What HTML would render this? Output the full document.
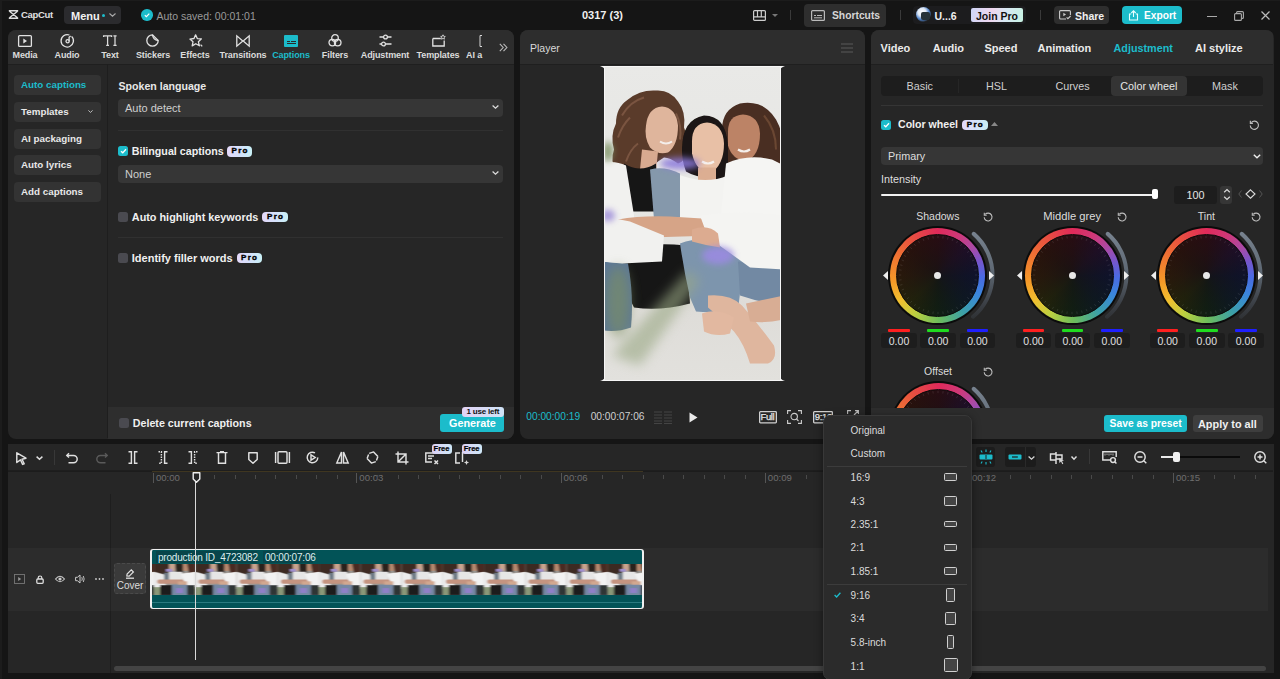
<!DOCTYPE html>
<html><head><meta charset="utf-8">
<style>
*{box-sizing:border-box;margin:0;padding:0}
html,body{width:1280px;height:679px;overflow:hidden;background:#151515;font-family:"Liberation Sans",sans-serif;color:#e6e6e6;position:relative}
div,svg,span{position:absolute}
.b{font-weight:bold}
.t{white-space:nowrap;line-height:1}
.pro{height:10.5px;border-radius:4px;background:linear-gradient(90deg,#e4d8fa,#d4e2fb 55%,#c9f1f6);color:#000;font-size:8px;font-weight:bold;line-height:10.5px;text-align:center;letter-spacing:1.3px;text-indent:1.3px;-webkit-text-stroke:0.4px #000}
.sb{left:14px;width:87px;height:19.5px;background:#333;border-radius:4px}
.sbt{left:21px;font-size:9.8px;font-weight:bold;color:#e8e8e8}
.dd{background:#363636;border-radius:4px}
.cb{width:10px;height:10px;border-radius:2.5px;background:#4a4a50}
.cbon{background:#1cbccb}
.tab{top:51px;font-size:9px;font-weight:bold;color:#dcdcdc;transform:translateX(-50%);letter-spacing:-0.1px}
svg{overflow:visible}
.wo{width:99px;height:99px;border-radius:50%;background:#0b0b0b}
.wr{width:95px;height:95px;border-radius:50%;background:conic-gradient(#e02a5a 0deg,#cf3878 28deg,#aa4aa6 52deg,#7656cc 72deg,#4a6ae2 92deg,#3a86dc 115deg,#3ca0a8 145deg,#6cbc5c 178deg,#bcd040 210deg,#f0c030 236deg,#f59a28 262deg,#f07a30 290deg,#e85040 325deg,#e02a5a 360deg)}
.wi{width:83px;height:83px;border-radius:50%;background:radial-gradient(circle,rgba(22,20,20,0.85) 0%,rgba(22,20,20,0.45) 45%,rgba(22,20,20,0.05) 100%),conic-gradient(#2e0a12 0deg,#220c2c 45deg,#0c1234 90deg,#0a1a28 135deg,#0e2212 180deg,#262808 225deg,#301a08 270deg,#2e100a 315deg,#2e0a12 360deg);border:1.5px solid #0b0b0b}
.wd{width:7px;height:7px;border-radius:50%;background:#e8e8e8}

</style></head><body>

<div style="left:0;top:0;width:1.5px;height:679px;background:#1c1c1c"></div>
<div style="left:0;top:0;width:1280px;height:1px;background:#1c1c1c"></div>
<!-- ============ TOP BAR ============ -->
<svg style="left:7.5px;top:10px" width="11" height="9" viewBox="0 0 11 9"><path d="M0.8 0.8h9.4M0.8 8.2h9.4M1.5 1.2L9.5 7.8M9.5 1.2L1.5 7.8" fill="none" stroke="#ddd" stroke-width="1.4"/></svg>
<div class="t b" style="left:21px;top:10.3px;font-size:9.5px;color:#e0e0e0;letter-spacing:-0.3px">CapCut</div>
<div style="left:64px;top:6px;width:57px;height:18px;background:#2b2b2e;border-radius:4px"></div>
<div class="t b" style="left:71px;top:10.6px;font-size:11px;color:#f2f2f2">Menu</div>
<div style="left:102px;top:13.5px;width:3px;height:3px;border-radius:50%;background:#1cbccb"></div>
<svg style="left:109px;top:13px" width="7" height="4" viewBox="0 0 7 4"><path d="M0.5 0.5L3.5 3.2L6.5 0.5" fill="none" stroke="#aaa" stroke-width="1.1"/></svg>
<div style="left:141px;top:9px;width:11.5px;height:11.5px;border-radius:50%;background:#1cbccb"></div>
<svg style="left:143px;top:11px" width="8" height="8" viewBox="0 0 8 8"><path d="M1.8 4.2L3.4 5.6L6.3 2.6" fill="none" stroke="#fff" stroke-width="1.2"/></svg>
<div class="t" style="left:156.5px;top:10.5px;font-size:10.5px;color:#9a9a9a">Auto saved: 00:01:01</div>
<div class="t b" style="left:582px;top:10.3px;font-size:11px;color:#f0f0f0">0317 (3)</div>

<svg style="left:753px;top:9.5px" width="13" height="11" viewBox="0 0 13 11"><rect x="0.6" y="0.6" width="11.8" height="9.8" rx="1" fill="none" stroke="#ccc" stroke-width="1.2"/><path d="M0.6 6.8h11.8M4.5 0.6v6.2M8.3 0.6v6.2" stroke="#ccc" stroke-width="1.2"/></svg>
<svg style="left:772px;top:13.5px" width="6" height="3" viewBox="0 0 6 3"><path d="M0 0h6L3 3z" fill="#777"/></svg>
<div style="left:790px;top:10px;width:1px;height:10px;background:#3a3a3a"></div>
<div style="left:803.5px;top:3.5px;width:82.5px;height:23.5px;background:#2e2e2e;border-radius:4px"></div>
<svg style="left:811px;top:10px" width="14" height="11" viewBox="0 0 14 11"><rect x="0.6" y="0.6" width="12.8" height="9.8" rx="1" fill="none" stroke="#bbb" stroke-width="1.2"/><path d="M3 5.5h2M6 5.5h5M3 7.8h8" stroke="#bbb" stroke-width="1"/></svg>
<div class="t b" style="left:832px;top:11.3px;font-size:10.3px;color:#d6d6d6">Shortcuts</div>

<div style="left:912.5px;top:6px;width:113.5px;height:18px;background:#1c1c1e;border-radius:4px"></div>
<div style="left:915.5px;top:7px;width:15px;height:15px;border-radius:50%;background:radial-gradient(circle at 40% 35%,#fff 0,#dfe8f5 30%,#4a7fc8 55%,#222 75%)"></div>
<div style="left:921px;top:12px;width:9px;height:8px;border-radius:2px;background:#263238"></div>
<div class="t b" style="left:934.5px;top:10.5px;font-size:10.5px;color:#f0f0f0">U...6</div>
<div style="left:971px;top:8px;width:52px;height:14px;border-radius:2px;background:linear-gradient(100deg,#cfd6f7 0%,#eed6ee 40%,#d9e8f3 65%,#c6f2e2 100%)"></div>
<div class="t b" style="left:976px;top:10.5px;font-size:10.5px;color:#111">Join Pro</div>
<div style="left:1040px;top:10px;width:1px;height:10px;background:#3a3a3a"></div>
<div style="left:899.5px;top:10px;width:1px;height:10px;background:#3a3a3a"></div>

<div style="left:1053.5px;top:6px;width:55px;height:18px;background:#2e2e2e;border-radius:4px"></div>
<svg style="left:1059px;top:10px" width="12" height="10" viewBox="0 0 12 10"><path d="M7 9H1.6A1 1 0 0 1 0.6 8V1.6A1 1 0 0 1 1.6 0.6h8.8a1 1 0 0 1 1 1V5" fill="none" stroke="#ccc" stroke-width="1.1"/><path d="M4.3 2.8v3.4L7 4.5z" fill="#ccc"/><path d="M7.6 7.4l1.3 1.3L11.6 6" fill="none" stroke="#ccc" stroke-width="1.1"/></svg>
<div class="t b" style="left:1075px;top:10.6px;font-size:10.5px;color:#f0f0f0">Share</div>
<div style="left:1122px;top:6px;width:60px;height:18px;background:#1cbccb;border-radius:4px"></div>
<svg style="left:1128px;top:9.5px" width="11" height="11" viewBox="0 0 11 11"><path d="M3.2 4H1.5v6h8V4H7.8" fill="none" stroke="#e8ffff" stroke-width="1.1"/><path d="M5.5 7V0.8M3.3 3L5.5 0.8L7.7 3" fill="none" stroke="#e8ffff" stroke-width="1.1"/></svg>
<div class="t b" style="left:1144px;top:10.6px;font-size:10.2px;color:#fff">Export</div>

<div style="left:1207px;top:15.5px;width:10px;height:1.2px;background:#aaa"></div>
<svg style="left:1234px;top:11px" width="10" height="10" viewBox="0 0 10 10"><rect x="0.6" y="2.6" width="6.8" height="6.8" rx="1" fill="none" stroke="#aaa" stroke-width="1.1"/><path d="M2.6 2.6V1.6a1 1 0 0 1 1-1h4.8a1 1 0 0 1 1 1v4.8a1 1 0 0 1-1 1H7.4" fill="none" stroke="#aaa" stroke-width="1.1"/></svg>
<svg style="left:1261px;top:11px" width="9" height="9" viewBox="0 0 9 9"><path d="M0.5 0.5l8 8M8.5 0.5l-8 8" stroke="#bbb" stroke-width="1.2"/></svg>

<!-- ============ PANEL BACKGROUNDS ============ -->
<div style="left:7.5px;top:30px;width:506.5px;height:408.8px;background:#262626;border-radius:8px;overflow:hidden">
  <div style="left:0;top:0;width:506px;height:34.8px;background:#2d2d2d;border-bottom:1.2px solid #1f1f1f"></div>
  <div style="left:99.5px;top:34px;width:1px;height:374px;background:#1e1e1e"></div>
  <div style="left:100.5px;top:377.2px;width:406px;height:32px;background:#2e2e2e"></div>
</div>
<div style="left:519.5px;top:30px;width:345.5px;height:408.8px;background:#262626;border-radius:8px;overflow:hidden">
  <div style="left:0;top:0;width:345px;height:34.8px;background:#2d2d2d;border-bottom:1.2px solid #1f1f1f"></div>
</div>
<div style="left:871px;top:30px;width:402.5px;height:408.8px;background:#262626;border-radius:8px;overflow:hidden" id="rp">
  <div style="left:0;top:0;width:402px;height:34.8px;background:#2d2d2d;border-bottom:1.2px solid #1f1f1f"></div>
</div>
<div style="left:7.5px;top:443.5px;width:1266px;height:229.5px;background:#262626" id="tl">
  <div style="left:0;top:0;width:1265px;height:27px;border-bottom:1px solid #1e1e1e"></div>
</div>

<!-- ============ LEFT PANEL CONTENT ============ -->
<!-- tabs -->
<svg style="left:18px;top:35px" width="14" height="12" viewBox="0 0 14 12"><rect x="0.6" y="0.6" width="12.8" height="10.8" rx="1" fill="none" stroke="#e2e2e2" stroke-width="1.3"/><path d="M5.3 3.6v4.8L9 6z" fill="#e2e2e2"/></svg>
<div class="t tab" style="left:25px">Media</div>
<svg style="left:60.5px;top:34px" width="14" height="14" viewBox="0 0 14 14"><path d="M10.6 2.4A6.2 6.2 0 1 1 8.4 1" fill="none" stroke="#e2e2e2" stroke-width="1.3"/><circle cx="6.6" cy="7.2" r="1.6" fill="none" stroke="#e2e2e2" stroke-width="1.3"/><path d="M8.1 7.2V3.2L9.6 1.9" fill="none" stroke="#e2e2e2" stroke-width="1.3"/></svg>
<div class="t tab" style="left:67px">Audio</div>
<svg style="left:103px;top:35px" width="15" height="11" viewBox="0 0 15 11"><path d="M0.6 2V0.9H8.6V2M4.6 0.9V10.3M3.2 10.3H6M10.4 0.9H13.6M12 0.9V10.3M10.4 10.3H13.6" fill="none" stroke="#dcdcdc" stroke-width="1.25"/></svg>
<div class="t tab" style="left:110px">Text</div>
<svg style="left:146px;top:34px" width="13" height="13" viewBox="0 0 13 13"><path d="M6.5 0.8A5.7 5.7 0 1 0 12.2 6.5L6.5 0.8z" fill="none" stroke="#e2e2e2" stroke-width="1.3"/><path d="M6.5 0.8Q7 6 12.2 6.5" fill="none" stroke="#e2e2e2" stroke-width="1.3"/></svg>
<div class="t tab" style="left:153px">Stickers</div>
<svg style="left:188.5px;top:33.5px" width="15" height="14" viewBox="0 0 15 14"><path d="M6.6 0.8L8.3 4.6L12.4 4.9L9.4 7.8L10.4 11.8L6.8 9.7L3.2 11.9L4 7.8L0.9 5.1L5 4.5z" fill="none" stroke="#e2e2e2" stroke-width="1.3" stroke-linejoin="round"/><path d="M11.6 10.6l1.6 1.8" stroke="#e2e2e2" stroke-width="1.3"/></svg>
<div class="t tab" style="left:195px">Effects</div>
<svg style="left:236px;top:35px" width="14" height="12" viewBox="0 0 14 12"><path d="M0.8 0.8v10.4L6.8 6zM13.2 0.8v10.4L7.2 6z" fill="none" stroke="#e2e2e2" stroke-width="1.3"/></svg>
<div class="t tab" style="left:243px">Transitions</div>
<div style="left:284px;top:35px;width:14px;height:12px;background:#1cbccb;border-radius:1px"></div>
<div style="left:286.5px;top:41.2px;width:3px;height:1.1px;background:#2a2a2a"></div><div style="left:290.5px;top:41.2px;width:5px;height:1.1px;background:#2a2a2a"></div>
<div style="left:286.5px;top:43.4px;width:9px;height:1.1px;background:#2a2a2a"></div>
<div class="t tab" style="left:291px;color:#1cbccb">Captions</div>
<svg style="left:328px;top:34px" width="14" height="13" viewBox="0 0 14 13"><circle cx="7" cy="4" r="3.3" fill="none" stroke="#e2e2e2" stroke-width="1.3"/><circle cx="4.3" cy="8.6" r="3.3" fill="none" stroke="#e2e2e2" stroke-width="1.3"/><circle cx="9.7" cy="8.6" r="3.3" fill="none" stroke="#e2e2e2" stroke-width="1.3"/></svg>
<div class="t tab" style="left:335px">Filters</div>
<svg style="left:379px;top:34px" width="13" height="13" viewBox="0 0 13 13"><path d="M0.5 3h4M8.5 3h4M0.5 10h2M6.5 10h6" stroke="#e2e2e2" stroke-width="1.3"/><circle cx="6.5" cy="3" r="1.9" fill="none" stroke="#e2e2e2" stroke-width="1.3"/><circle cx="4.5" cy="10" r="1.9" fill="none" stroke="#e2e2e2" stroke-width="1.3"/></svg>
<div class="t tab" style="left:385px">Adjustment</div>
<svg style="left:432px;top:34px" width="14" height="13" viewBox="0 0 14 13"><path d="M0.8 4.5h8M0.8 4.5V12h11.4V6.5" fill="none" stroke="#e2e2e2" stroke-width="1.3"/><path d="M11 0.8l0.7 1.5 1.6 0.2-1.2 1.1 0.3 1.6-1.4-0.8-1.4 0.8 0.3-1.6-1.2-1.1 1.6-0.2z" fill="none" stroke="#d6d6d6" stroke-width="0.9"/></svg>
<div class="t tab" style="left:438px">Templates</div>
<svg style="left:479px;top:35px" width="4" height="12" viewBox="0 0 4 12"><path d="M3 0.5H1v11h2" fill="none" stroke="#d6d6d6" stroke-width="1"/></svg>
<div class="t tab" style="left:466px;transform:none">AI a</div>
<svg style="left:499px;top:43px" width="9" height="9" viewBox="0 0 9 9"><path d="M0.8 0.8L4.2 4.5L0.8 8.2M4.5 0.8L7.9 4.5L4.5 8.2" fill="none" stroke="#bbb" stroke-width="1.1"/></svg>

<!-- sidebar -->
<div class="sb" style="top:75px"></div><div class="t sbt" style="top:80px;color:#1cbccb">Auto captions</div>
<div class="sb" style="top:102px"></div><div class="t sbt" style="top:107px">Templates</div>
<svg style="left:88px;top:110px" width="5" height="3" viewBox="0 0 5 3"><path d="M0.4 0.4L2.5 2.4L4.6 0.4" fill="none" stroke="#ccc" stroke-width="0.9"/></svg>
<div class="sb" style="top:129px"></div><div class="t sbt" style="top:134px">AI packaging</div>
<div class="sb" style="top:155px"></div><div class="t sbt" style="top:160px">Auto lyrics</div>
<div class="sb" style="top:182px"></div><div class="t sbt" style="top:187px">Add captions</div>

<!-- content -->
<div class="t b" style="left:118.5px;top:80.5px;font-size:10.6px;color:#e8e8e8">Spoken language</div>
<div class="dd" style="left:118px;top:98.5px;width:385px;height:18px"></div>
<div class="t" style="left:125px;top:102.5px;font-size:11px;color:#cfcfcf">Auto detect</div>
<svg style="left:492px;top:105px" width="7" height="4" viewBox="0 0 7 4"><path d="M0.6 0.6L3.5 3.2L6.4 0.6" fill="none" stroke="#ddd" stroke-width="1.3"/></svg>
<div style="left:118px;top:130px;width:385px;height:1px;background:#303030"></div>

<div class="cb cbon" style="left:118.3px;top:146px"></div>
<svg style="left:119px;top:147px" width="9" height="8" viewBox="0 0 9 8"><path d="M2 4.2L3.8 5.8L7 2.3" fill="none" stroke="#fff" stroke-width="1.3"/></svg>
<div class="t b" style="left:131.7px;top:146px;font-size:10.7px;color:#f0f0f0">Bilingual captions</div>
<div class="t pro" style="left:227px;top:146.3px;width:25px">Pro</div>
<div class="dd" style="left:118px;top:164.5px;width:385px;height:18px"></div>
<div class="t" style="left:125px;top:168.5px;font-size:11px;color:#cfcfcf">None</div>
<svg style="left:492px;top:171px" width="7" height="4" viewBox="0 0 7 4"><path d="M0.6 0.6L3.5 3.2L6.4 0.6" fill="none" stroke="#ddd" stroke-width="1.3"/></svg>

<div class="cb" style="left:118.2px;top:212px"></div>
<div class="t b" style="left:131.8px;top:211.5px;font-size:10.85px;color:#f0f0f0">Auto highlight keywords</div>
<div class="t pro" style="left:262px;top:211.5px;width:26px">Pro</div>
<div style="left:118px;top:237px;width:385px;height:1px;background:#303030"></div>
<div class="cb" style="left:118.2px;top:253px"></div>
<div class="t b" style="left:131.8px;top:252.5px;font-size:11px;color:#f0f0f0">Identify filler words</div>
<div class="t pro" style="left:236.5px;top:252.5px;width:25px">Pro</div>

<div class="cb" style="left:118.8px;top:417.7px"></div>
<div class="t b" style="left:132.8px;top:417.5px;font-size:10.7px;color:#f0f0f0">Delete current captions</div>
<div style="left:440.3px;top:413.5px;width:63.4px;height:18.5px;background:#1cbccb;border-radius:3px"></div>
<div class="t b" style="left:449px;top:417.5px;font-size:10.8px;color:#fff">Generate</div>
<div class="t" style="left:462px;top:407px;width:41.7px;height:9.5px;border-radius:3px;background:linear-gradient(90deg,#e2d3f5,#cfe3f7);color:#111;font-size:8px;font-weight:bold;line-height:9.5px;text-align:center;letter-spacing:-0.2px">1 use left</div>

<svg style="left:0;top:0;width:0;height:0" width="0" height="0"><defs>
<linearGradient id="arcG" x1="0" y1="-50" x2="0" y2="50" gradientUnits="userSpaceOnUse"><stop offset="0" stop-color="#7c8794"/><stop offset="0.45" stop-color="#5f6974"/><stop offset="0.8" stop-color="#3a3e44"/><stop offset="1" stop-color="#2a2c2e"/></linearGradient>
</defs></svg>
<!-- ============ PLAYER CONTENT ============ -->
<div class="t" style="left:530px;top:42.5px;font-size:10.5px;color:#dadada">Player</div>
<svg style="left:840.5px;top:42.5px" width="12" height="10" viewBox="0 0 12 10"><path d="M0 1h12M0 5h12M0 9h12" stroke="#5a5a5a" stroke-width="1.2"/></svg>

<svg style="left:604px;top:66px;overflow:hidden" width="177" height="314.5" viewBox="4 0.5 177 314.5" preserveAspectRatio="none">
<defs>
<filter id="bl1" x="-30%" y="-30%" width="160%" height="160%"><feGaussianBlur stdDeviation="0.7"/></filter>
<filter id="bl2" x="-50%" y="-50%" width="200%" height="200%"><feGaussianBlur stdDeviation="3"/></filter>
<filter id="bl3" x="-50%" y="-50%" width="200%" height="200%"><feGaussianBlur stdDeviation="6"/></filter>
<linearGradient id="bgG" x1="0" y1="0" x2="0" y2="1"><stop offset="0" stop-color="#e9e9e7"/><stop offset="0.5" stop-color="#e5e5e2"/><stop offset="0.75" stop-color="#dedcd8"/><stop offset="1" stop-color="#e2e1dd"/></linearGradient>
</defs>
<rect width="184" height="316" fill="url(#bgG)"/>
<g filter="url(#bl1)">
<!-- left woman hair -->
<path d="M14 84 Q10 70 16 58 Q16 42 28 34 Q40 24 56 25 Q70 24 78 36 Q86 46 84 62 Q90 74 84 86 Q86 96 78 98 Q70 92 64 92 Q54 98 48 106 Q40 112 30 108 Q20 112 16 104 Q10 96 14 84z" fill="#5a3b2b"/><path d="M22 50 Q30 36 44 32 M18 72 Q22 60 30 52 M26 96 Q30 84 38 78 M76 48 Q82 60 80 74" stroke="#7a5440" stroke-width="2" fill="none"/>
<!-- right woman hair -->
<path d="M122 64 Q122 44 140 38 Q164 34 176 54 Q186 72 184 96 Q186 116 180 128 Q170 130 162 120 Q154 108 146 102 Q136 106 128 98 Q120 82 122 64z" fill="#4a2e22"/><path d="M164 50 Q176 64 176 84 M170 96 Q176 110 172 122" stroke="#6a4632" stroke-width="2" fill="none"/>
<!-- middle woman hair -->
<path d="M82 84 Q82 54 104 50 Q126 50 128 80 L128 116 Q116 118 110 112 Q96 112 86 106 Q82 96 82 84z" fill="#1a1412"/>
<!-- faces -->
<path d="M46 60 Q48 42 62 41 Q76 42 78 60 Q78 80 68 87 Q58 90 50 82 Q44 72 46 60z" fill="#dfb59c"/>
<path d="M92 76 Q92 58 107 57 Q123 58 124 78 Q124 100 110 108 Q96 106 92 88z" fill="#e8c0a6"/>
<path d="M128 66 Q128 50 143 49 Q159 50 160 68 Q160 90 146 96 Q132 94 128 80z" fill="#bc8366"/>
<!-- smiles -->
<path d="M60 76 Q66 80 72 76" stroke="#f4eeea" stroke-width="2" fill="none"/>
<path d="M102 96 Q108 100 114 96" stroke="#f6f0ec" stroke-width="2.2" fill="none"/>
<path d="M138 84 Q144 88 150 84" stroke="#f4eeea" stroke-width="2.2" fill="none"/>
<!-- necks / chest -->
<path d="M42 84 L58 86 L56 106 L40 104z" fill="#d8aa90"/>
<path d="M98 102 L116 102 L116 116 L98 116z" fill="#dcae92"/>
<!-- black top left woman -->
<path d="M24 98 Q40 108 56 98 L58 146 L28 146z" fill="#151313"/>
<!-- left white shirt -->
<path d="M0 98 Q14 94 26 100 L34 150 L34 200 L0 200z" fill="#f1f1ef"/>
<!-- middle white top -->
<path d="M76 108 Q104 120 128 110 L130 160 L76 162z" fill="#f3f3f1"/>
<!-- right white shirt -->
<path d="M126 98 Q148 88 172 94 L184 100 L184 206 L150 202 L128 184 L120 160z" fill="#f5f5f3"/>
<!-- denim jacket -->
<path d="M50 104 Q64 100 80 108 L80 152 L54 154z" fill="#8598ab"/>
<!-- black pants -->
<path d="M22 184 Q50 176 86 180 L90 238 Q60 246 34 242 Q22 220 22 184z" fill="#161515"/>
<!-- jeans knee/shin -->
<path d="M80 178 Q100 170 124 176 Q142 186 150 200 L140 228 L138 244 Q116 248 96 246 L90 232 Q84 206 80 178z" fill="#7d95ad"/>
<!-- jeans right part -->
<path d="M138 196 L184 200 L184 240 Q164 238 140 230z" fill="#7289a3"/>
<!-- left jeans -->
<path d="M0 196 L28 198 Q34 230 31 262 Q14 268 0 264z" fill="#5d7896"/>
<!-- arm across -->
<path d="M18 154 Q40 150 70 151 L118 154 L118 170 Q80 171 50 172 L20 174z" fill="#d6a487"/>
<!-- left white shirt lower -->
<path d="M0 150 L30 156 L64 170 L62 196 L22 198 L0 196z" fill="#f1f1ef"/>
<!-- right white sleeve -->
<path d="M100 150 Q140 144 184 150 L184 204 L150 202 Q128 186 108 172z" fill="#f4f4f2"/>
<!-- hand on knee -->
<path d="M92 164 Q108 158 118 168 L120 182 Q106 180 92 176z" fill="#dcab90"/>
<!-- legs -->
<path d="M108 230 Q130 228 142 240 Q158 258 174 280 Q178 294 168 298 L150 298 Q144 278 134 266 Q120 252 108 242z" fill="#dfb69e"/>
<path d="M146 238 L184 230 L184 254 Q166 258 150 256z" fill="#d8ad94"/>
<path d="M102 248 Q118 242 134 252 L130 268 Q116 272 104 266z" fill="#e2b8a0"/>
</g>
<!-- blurred foliage -->
<g filter="url(#bl3)" opacity="0.6">
<path d="M88 205 L100 215 L40 300 L12 290z" fill="#9aa884"/>
<ellipse cx="18" cy="236" rx="12" ry="36" fill="#7d9060"/>
</g>
<g filter="url(#bl2)" opacity="0.85">
<ellipse cx="80" cy="98" rx="20" ry="6" fill="#8a78dc"/>
<ellipse cx="118" cy="190" rx="16" ry="9" fill="#9c8ae4"/>
<ellipse cx="8" cy="150" rx="7" ry="6" fill="#9a88d8"/>
<ellipse cx="8" cy="86" rx="5" ry="10" fill="#7c9262"/>
</g>
</svg>
<div style="left:604px;top:66px;width:177px;height:314.5px;border:1.5px solid #f6f6f6"></div>
<svg style="left:600px;top:66px" width="5" height="5" viewBox="0 0 5 5"><path d="M0 0H5V5Q5 1.5 0 0z" fill="#f6f6f6"/></svg>
<svg style="left:780px;top:66px" width="5" height="5" viewBox="0 0 5 5"><path d="M5 0H0V5Q0 1.5 5 0z" fill="#f6f6f6"/></svg>
<svg style="left:600px;top:375.5px" width="5" height="5" viewBox="0 0 5 5"><path d="M0 5H5V0Q5 3.5 0 5z" fill="#f6f6f6"/></svg>
<svg style="left:780px;top:375.5px" width="5" height="5" viewBox="0 0 5 5"><path d="M5 5H0V0Q0 3.5 5 5z" fill="#f6f6f6"/></svg>
<div class="t" style="left:526.3px;top:411.5px;font-size:10.2px;color:#1cbccb">00:00:00:19</div>
<div class="t" style="left:590.7px;top:411.5px;font-size:10.2px;color:#d0d0d0">00:00:07:06</div>
<svg style="left:654px;top:410.5px" width="19" height="13" viewBox="0 0 19 13"><path d="M0 1h8M0 4h8M0 7h8M0 10h8M0 12.5h8M10 1h8M10 4h8M10 7h8M10 10h8M10 12.5h8" stroke="#444" stroke-width="1"/></svg>
<svg style="left:688.5px;top:411.5px" width="9" height="11" viewBox="0 0 9 11"><path d="M0.5 0.5v10L8.5 5.5z" fill="#eaeaea"/></svg>
<svg style="left:758.5px;top:410.5px" width="18" height="12.5" viewBox="0 0 18 12.5"><rect x="0.65" y="0.65" width="16.7" height="11.2" rx="0.8" fill="none" stroke="#d0d0d0" stroke-width="1.3"/></svg>
<div class="t" style="left:760.5px;top:412.3px;font-size:9.5px;color:#e6e6e6;letter-spacing:-0.4px;-webkit-text-stroke:0.25px #e6e6e6">Full</div>
<svg style="left:787px;top:410px" width="15" height="14" viewBox="0 0 15 14"><path d="M0.6 4V0.6H4M11 0.6h3.4V4M14.4 10v3.4H11M4 13.4H0.6V10" fill="none" stroke="#ccc" stroke-width="1.1"/><circle cx="7.2" cy="6.6" r="3.2" fill="none" stroke="#ccc" stroke-width="1.1"/><path d="M9.5 9l2 2" stroke="#ccc" stroke-width="1.1"/></svg>
<svg style="left:813px;top:410.5px" width="20" height="12.5" viewBox="0 0 20 12.5"><rect x="0.65" y="0.65" width="18.7" height="11.2" rx="0.8" fill="none" stroke="#d0d0d0" stroke-width="1.3"/></svg>
<div class="t" style="left:814.8px;top:412.3px;font-size:9.5px;color:#e6e6e6;letter-spacing:-0.3px;-webkit-text-stroke:0.25px #e6e6e6">9:16</div>
<svg style="left:847px;top:410px" width="12" height="12" viewBox="0 0 12 12"><path d="M0.6 4V0.6H4M8 0.6h3.4V4M11.4 8v3.4H8M4 11.4H0.6V8M7 5l4-4" fill="none" stroke="#bbb" stroke-width="1.1"/></svg>

<!-- ============ RIGHT PANEL CONTENT ============ -->
<div class="t b" style="left:880.5px;top:42.7px;font-size:11px;color:#eaeaea">Video</div>
<div class="t b" style="left:932.8px;top:42.7px;font-size:11px;color:#eaeaea">Audio</div>
<div class="t b" style="left:984.4px;top:42.7px;font-size:11px;color:#eaeaea">Speed</div>
<div class="t b" style="left:1037.5px;top:42.7px;font-size:11px;color:#eaeaea">Animation</div>
<div class="t b" style="left:1113.5px;top:42.7px;font-size:10.8px;color:#1cbccb">Adjustment</div>
<div class="t b" style="left:1195px;top:42.7px;font-size:11px;color:#eaeaea">AI stylize</div>

<div style="left:881px;top:76px;width:382px;height:20px;background:#1d1d1d;border-radius:4px"></div>
<div style="left:1111px;top:76px;width:75.6px;height:20px;background:#343434;border-radius:4px"></div>
<div style="left:957.5px;top:79px;width:1px;height:14px;background:#262626"></div>
<div class="t" style="left:919.8px;top:80.5px;font-size:10.8px;color:#cfcfcf;transform:translateX(-50%)">Basic</div>
<div class="t" style="left:996.5px;top:80.5px;font-size:10.8px;color:#cfcfcf;transform:translateX(-50%)">HSL</div>
<div class="t" style="left:1072.5px;top:80.5px;font-size:10.8px;color:#cfcfcf;transform:translateX(-50%)">Curves</div>
<div class="t" style="left:1148.8px;top:80.5px;font-size:10.8px;color:#e6e6e6;transform:translateX(-50%)">Color wheel</div>
<div class="t" style="left:1225px;top:80.5px;font-size:10.8px;color:#cfcfcf;transform:translateX(-50%)">Mask</div>
<div style="left:881px;top:104.5px;width:382px;height:1.2px;background:#353535"></div>

<div class="cb cbon" style="left:881px;top:119.6px"></div>
<svg style="left:881.7px;top:120.6px" width="9" height="8" viewBox="0 0 9 8"><path d="M2 4.2L3.8 5.8L7 2.3" fill="none" stroke="#fff" stroke-width="1.3"/></svg>
<div class="t b" style="left:898px;top:119px;font-size:10.6px;color:#f0f0f0">Color wheel</div>
<div class="t pro" style="left:962px;top:119.5px;width:25.5px">Pro</div>
<svg style="left:990.5px;top:122px" width="7" height="4" viewBox="0 0 7 4"><path d="M0 4L3.5 0L7 4z" fill="#888"/></svg>
<svg style="left:1248.7px;top:120px" width="10.5" height="10.5" viewBox="0 0 10 10"><path d="M2.2 2.4A3.9 3.9 0 1 1 1.2 5.2" fill="none" stroke="#bdbdbd" stroke-width="1.1"/><path d="M1.3 0.8V3.2H3.7" fill="none" stroke="#bdbdbd" stroke-width="1.1"/></svg>

<div class="dd" style="left:881px;top:147px;width:382px;height:18.2px"></div>
<div class="t" style="left:888px;top:151px;font-size:10.8px;color:#dedede">Primary</div>
<svg style="left:1252.5px;top:153.5px" width="8" height="5" viewBox="0 0 8 5"><path d="M0.8 0.8L4 3.8L7.2 0.8" fill="none" stroke="#eee" stroke-width="1.4"/></svg>

<div class="t" style="left:881px;top:174px;font-size:10.8px;color:#dedede">Intensity</div>
<div style="left:881px;top:193.5px;width:273px;height:2px;background:#f2f2f2;border-radius:1px"></div>
<div style="left:1151.6px;top:189px;width:6.4px;height:10px;background:#fff;border-radius:2px"></div>
<div style="left:1173.6px;top:185.5px;width:43.8px;height:18.5px;background:#1d1d1d;border-radius:3px"></div>
<div class="t" style="left:1195.5px;top:189.5px;font-size:10.8px;color:#e6e6e6;transform:translateX(-50%)">100</div>
<div style="left:1220.4px;top:185.5px;width:12px;height:18.5px;background:#363636;border-radius:3px"></div>
<svg style="left:1222.5px;top:188px" width="8" height="13" viewBox="0 0 8 13"><path d="M1.2 4.2L4 1.5L6.8 4.2M1.2 8.8L4 11.5L6.8 8.8" fill="none" stroke="#ddd" stroke-width="1.2"/></svg>
<svg style="left:1237.5px;top:190px" width="4" height="8" viewBox="0 0 4 8"><path d="M3.5 0.5L0.8 4L3.5 7.5" fill="none" stroke="#555" stroke-width="1"/></svg>
<svg style="left:1244.5px;top:189px" width="11" height="10" viewBox="0 0 11 10"><path d="M5.5 0.8L10 5L5.5 9.2L1 5z" fill="none" stroke="#ddd" stroke-width="1.1"/></svg>
<svg style="left:1258.5px;top:190px" width="4" height="8" viewBox="0 0 4 8"><path d="M0.5 0.5L3.2 4L0.5 7.5" fill="none" stroke="#555" stroke-width="1"/></svg>

<div class="t" style="left:937.8px;top:211px;font-size:10.5px;color:#dcdcdc;transform:translateX(-50%)">Shadows</div>
<svg style="left:983.4px;top:211.5px" width="10" height="10" viewBox="0 0 10 10"><path d="M2.2 2.4A3.9 3.9 0 1 1 1.2 5.2" fill="none" stroke="#bdbdbd" stroke-width="1.1"/><path d="M1.3 0.8V3.2H3.7" fill="none" stroke="#bdbdbd" stroke-width="1.1"/></svg>
<svg style="left:877.8px;top:215px" width="120" height="120" viewBox="-60 -60 120 120"><path d="M35.76 -41.13A54.5 54.5 0 0 1 35.03 41.75" fill="none" stroke="url(#arcG)" stroke-width="4" stroke-linecap="round"/></svg>
<div class="wo" style="left:888.3px;top:225.5px"></div>
<div class="wr" style="left:890.3px;top:227.5px"></div>
<div class="wi" style="left:896.3px;top:233.5px"></div>
<svg style="left:896.8px;top:234px" width="82" height="82" viewBox="-41 -41 82 82"><path d="M0.00 -36.80L0.00 -39.20M4.80 -36.49L5.12 -38.86M9.52 -35.55L10.15 -37.86M14.08 -34.00L15.00 -36.22M18.40 -31.87L19.60 -33.95M22.40 -29.20L23.86 -31.10M26.02 -26.02L27.72 -27.72M29.20 -22.40L31.10 -23.86M31.87 -18.40L33.95 -19.60M34.00 -14.08L36.22 -15.00M35.55 -9.52L37.86 -10.15M36.49 -4.80L38.86 -5.12M36.80 -0.00L39.20 -0.00M36.49 4.80L38.86 5.12M35.55 9.52L37.86 10.15M34.00 14.08L36.22 15.00M31.87 18.40L33.95 19.60M29.20 22.40L31.10 23.86M26.02 26.02L27.72 27.72M22.40 29.20L23.86 31.10M18.40 31.87L19.60 33.95M14.08 34.00L15.00 36.22M9.52 35.55L10.15 37.86M4.80 36.49L5.12 38.86M0.00 36.80L0.00 39.20M-4.80 36.49L-5.12 38.86M-9.52 35.55L-10.15 37.86M-14.08 34.00L-15.00 36.22M-18.40 31.87L-19.60 33.95M-22.40 29.20L-23.86 31.10M-26.02 26.02L-27.72 27.72M-29.20 22.40L-31.10 23.86M-31.87 18.40L-33.95 19.60M-34.00 14.08L-36.22 15.00M-35.55 9.52L-37.86 10.15M-36.49 4.80L-38.86 5.12M-36.80 0.00L-39.20 0.00M-36.49 -4.80L-38.86 -5.12M-35.55 -9.52L-37.86 -10.15M-34.00 -14.08L-36.22 -15.00M-31.87 -18.40L-33.95 -19.60M-29.20 -22.40L-31.10 -23.86M-26.02 -26.02L-27.72 -27.72M-22.40 -29.20L-23.86 -31.10M-18.40 -31.87L-19.60 -33.95M-14.08 -34.00L-15.00 -36.22M-9.52 -35.55L-10.15 -37.86M-4.80 -36.49L-5.12 -38.86" stroke="rgba(255,255,255,0.11)" stroke-width="0.9"/></svg>
<div class="wd" style="left:934.3px;top:271.5px"></div>
<svg style="left:882.8px;top:270.5px" width="5" height="9" viewBox="0 0 5 9"><path d="M5 0v9L0 4.5z" fill="#eee"/></svg>
<svg style="left:989.3px;top:270.5px" width="5" height="9" viewBox="0 0 5 9"><path d="M0 0v9L5 4.5z" fill="#eee"/></svg>
<div style="left:881.1999999999999px;top:333.3px;width:35.6px;height:15.2px;background:#1d1d1d;border-radius:3px"></div>
<div style="left:888.1999999999999px;top:328.8px;width:21.6px;height:3px;background:#ff1f1f;border-radius:1px"></div>
<div class="t" style="left:898.9999999999999px;top:335.5px;font-size:10.5px;color:#e0e0e0;transform:translateX(-50%)">0.00</div>
<div style="left:920.4px;top:333.3px;width:35.6px;height:15.2px;background:#1d1d1d;border-radius:3px"></div>
<div style="left:927.4px;top:328.8px;width:21.6px;height:3px;background:#1fdc1f;border-radius:1px"></div>
<div class="t" style="left:938.1999999999999px;top:335.5px;font-size:10.5px;color:#e0e0e0;transform:translateX(-50%)">0.00</div>
<div style="left:959.5999999999999px;top:333.3px;width:35.6px;height:15.2px;background:#1d1d1d;border-radius:3px"></div>
<div style="left:966.5999999999999px;top:328.8px;width:21.6px;height:3px;background:#1f1fff;border-radius:1px"></div>
<div class="t" style="left:977.3999999999999px;top:335.5px;font-size:10.5px;color:#e0e0e0;transform:translateX(-50%)">0.00</div>
<div class="t" style="left:1072.2px;top:211px;font-size:11.2px;color:#dcdcdc;transform:translateX(-50%)">Middle grey</div>
<svg style="left:1117.2px;top:211.5px" width="10" height="10" viewBox="0 0 10 10"><path d="M2.2 2.4A3.9 3.9 0 1 1 1.2 5.2" fill="none" stroke="#bdbdbd" stroke-width="1.1"/><path d="M1.3 0.8V3.2H3.7" fill="none" stroke="#bdbdbd" stroke-width="1.1"/></svg>
<svg style="left:1012.2px;top:215px" width="120" height="120" viewBox="-60 -60 120 120"><path d="M35.76 -41.13A54.5 54.5 0 0 1 35.03 41.75" fill="none" stroke="url(#arcG)" stroke-width="4" stroke-linecap="round"/></svg>
<div class="wo" style="left:1022.7px;top:225.5px"></div>
<div class="wr" style="left:1024.7px;top:227.5px"></div>
<div class="wi" style="left:1030.7px;top:233.5px"></div>
<svg style="left:1031.2px;top:234px" width="82" height="82" viewBox="-41 -41 82 82"><path d="M0.00 -36.80L0.00 -39.20M4.80 -36.49L5.12 -38.86M9.52 -35.55L10.15 -37.86M14.08 -34.00L15.00 -36.22M18.40 -31.87L19.60 -33.95M22.40 -29.20L23.86 -31.10M26.02 -26.02L27.72 -27.72M29.20 -22.40L31.10 -23.86M31.87 -18.40L33.95 -19.60M34.00 -14.08L36.22 -15.00M35.55 -9.52L37.86 -10.15M36.49 -4.80L38.86 -5.12M36.80 -0.00L39.20 -0.00M36.49 4.80L38.86 5.12M35.55 9.52L37.86 10.15M34.00 14.08L36.22 15.00M31.87 18.40L33.95 19.60M29.20 22.40L31.10 23.86M26.02 26.02L27.72 27.72M22.40 29.20L23.86 31.10M18.40 31.87L19.60 33.95M14.08 34.00L15.00 36.22M9.52 35.55L10.15 37.86M4.80 36.49L5.12 38.86M0.00 36.80L0.00 39.20M-4.80 36.49L-5.12 38.86M-9.52 35.55L-10.15 37.86M-14.08 34.00L-15.00 36.22M-18.40 31.87L-19.60 33.95M-22.40 29.20L-23.86 31.10M-26.02 26.02L-27.72 27.72M-29.20 22.40L-31.10 23.86M-31.87 18.40L-33.95 19.60M-34.00 14.08L-36.22 15.00M-35.55 9.52L-37.86 10.15M-36.49 4.80L-38.86 5.12M-36.80 0.00L-39.20 0.00M-36.49 -4.80L-38.86 -5.12M-35.55 -9.52L-37.86 -10.15M-34.00 -14.08L-36.22 -15.00M-31.87 -18.40L-33.95 -19.60M-29.20 -22.40L-31.10 -23.86M-26.02 -26.02L-27.72 -27.72M-22.40 -29.20L-23.86 -31.10M-18.40 -31.87L-19.60 -33.95M-14.08 -34.00L-15.00 -36.22M-9.52 -35.55L-10.15 -37.86M-4.80 -36.49L-5.12 -38.86" stroke="rgba(255,255,255,0.11)" stroke-width="0.9"/></svg>
<div class="wd" style="left:1068.7px;top:271.5px"></div>
<svg style="left:1017.2px;top:270.5px" width="5" height="9" viewBox="0 0 5 9"><path d="M5 0v9L0 4.5z" fill="#eee"/></svg>
<svg style="left:1123.7px;top:270.5px" width="5" height="9" viewBox="0 0 5 9"><path d="M0 0v9L5 4.5z" fill="#eee"/></svg>
<div style="left:1015.6px;top:333.3px;width:35.6px;height:15.2px;background:#1d1d1d;border-radius:3px"></div>
<div style="left:1022.6px;top:328.8px;width:21.6px;height:3px;background:#ff1f1f;border-radius:1px"></div>
<div class="t" style="left:1033.4px;top:335.5px;font-size:10.5px;color:#e0e0e0;transform:translateX(-50%)">0.00</div>
<div style="left:1054.8px;top:333.3px;width:35.6px;height:15.2px;background:#1d1d1d;border-radius:3px"></div>
<div style="left:1061.8px;top:328.8px;width:21.6px;height:3px;background:#1fdc1f;border-radius:1px"></div>
<div class="t" style="left:1072.6px;top:335.5px;font-size:10.5px;color:#e0e0e0;transform:translateX(-50%)">0.00</div>
<div style="left:1094.0px;top:333.3px;width:35.6px;height:15.2px;background:#1d1d1d;border-radius:3px"></div>
<div style="left:1101.0px;top:328.8px;width:21.6px;height:3px;background:#1f1fff;border-radius:1px"></div>
<div class="t" style="left:1111.8px;top:335.5px;font-size:10.5px;color:#e0e0e0;transform:translateX(-50%)">0.00</div>
<div class="t" style="left:1206.4px;top:211px;font-size:10.5px;color:#dcdcdc;transform:translateX(-50%)">Tint</div>
<svg style="left:1251.2px;top:211.5px" width="10" height="10" viewBox="0 0 10 10"><path d="M2.2 2.4A3.9 3.9 0 1 1 1.2 5.2" fill="none" stroke="#bdbdbd" stroke-width="1.1"/><path d="M1.3 0.8V3.2H3.7" fill="none" stroke="#bdbdbd" stroke-width="1.1"/></svg>
<svg style="left:1146.4px;top:215px" width="120" height="120" viewBox="-60 -60 120 120"><path d="M35.76 -41.13A54.5 54.5 0 0 1 35.03 41.75" fill="none" stroke="url(#arcG)" stroke-width="4" stroke-linecap="round"/></svg>
<div class="wo" style="left:1156.9px;top:225.5px"></div>
<div class="wr" style="left:1158.9px;top:227.5px"></div>
<div class="wi" style="left:1164.9px;top:233.5px"></div>
<svg style="left:1165.4px;top:234px" width="82" height="82" viewBox="-41 -41 82 82"><path d="M0.00 -36.80L0.00 -39.20M4.80 -36.49L5.12 -38.86M9.52 -35.55L10.15 -37.86M14.08 -34.00L15.00 -36.22M18.40 -31.87L19.60 -33.95M22.40 -29.20L23.86 -31.10M26.02 -26.02L27.72 -27.72M29.20 -22.40L31.10 -23.86M31.87 -18.40L33.95 -19.60M34.00 -14.08L36.22 -15.00M35.55 -9.52L37.86 -10.15M36.49 -4.80L38.86 -5.12M36.80 -0.00L39.20 -0.00M36.49 4.80L38.86 5.12M35.55 9.52L37.86 10.15M34.00 14.08L36.22 15.00M31.87 18.40L33.95 19.60M29.20 22.40L31.10 23.86M26.02 26.02L27.72 27.72M22.40 29.20L23.86 31.10M18.40 31.87L19.60 33.95M14.08 34.00L15.00 36.22M9.52 35.55L10.15 37.86M4.80 36.49L5.12 38.86M0.00 36.80L0.00 39.20M-4.80 36.49L-5.12 38.86M-9.52 35.55L-10.15 37.86M-14.08 34.00L-15.00 36.22M-18.40 31.87L-19.60 33.95M-22.40 29.20L-23.86 31.10M-26.02 26.02L-27.72 27.72M-29.20 22.40L-31.10 23.86M-31.87 18.40L-33.95 19.60M-34.00 14.08L-36.22 15.00M-35.55 9.52L-37.86 10.15M-36.49 4.80L-38.86 5.12M-36.80 0.00L-39.20 0.00M-36.49 -4.80L-38.86 -5.12M-35.55 -9.52L-37.86 -10.15M-34.00 -14.08L-36.22 -15.00M-31.87 -18.40L-33.95 -19.60M-29.20 -22.40L-31.10 -23.86M-26.02 -26.02L-27.72 -27.72M-22.40 -29.20L-23.86 -31.10M-18.40 -31.87L-19.60 -33.95M-14.08 -34.00L-15.00 -36.22M-9.52 -35.55L-10.15 -37.86M-4.80 -36.49L-5.12 -38.86" stroke="rgba(255,255,255,0.11)" stroke-width="0.9"/></svg>
<div class="wd" style="left:1202.9px;top:271.5px"></div>
<svg style="left:1151.4px;top:270.5px" width="5" height="9" viewBox="0 0 5 9"><path d="M5 0v9L0 4.5z" fill="#eee"/></svg>
<svg style="left:1257.9px;top:270.5px" width="5" height="9" viewBox="0 0 5 9"><path d="M0 0v9L5 4.5z" fill="#eee"/></svg>
<div style="left:1149.8000000000002px;top:333.3px;width:35.6px;height:15.2px;background:#1d1d1d;border-radius:3px"></div>
<div style="left:1156.8000000000002px;top:328.8px;width:21.6px;height:3px;background:#ff1f1f;border-radius:1px"></div>
<div class="t" style="left:1167.6000000000001px;top:335.5px;font-size:10.5px;color:#e0e0e0;transform:translateX(-50%)">0.00</div>
<div style="left:1189.0000000000002px;top:333.3px;width:35.6px;height:15.2px;background:#1d1d1d;border-radius:3px"></div>
<div style="left:1196.0000000000002px;top:328.8px;width:21.6px;height:3px;background:#1fdc1f;border-radius:1px"></div>
<div class="t" style="left:1206.8000000000002px;top:335.5px;font-size:10.5px;color:#e0e0e0;transform:translateX(-50%)">0.00</div>
<div style="left:1228.2000000000003px;top:333.3px;width:35.6px;height:15.2px;background:#1d1d1d;border-radius:3px"></div>
<div style="left:1235.2000000000003px;top:328.8px;width:21.6px;height:3px;background:#1f1fff;border-radius:1px"></div>
<div class="t" style="left:1246.0000000000002px;top:335.5px;font-size:10.5px;color:#e0e0e0;transform:translateX(-50%)">0.00</div>
<div class="t" style="left:938px;top:366px;font-size:10.5px;color:#dcdcdc;transform:translateX(-50%)">Offset</div>
<svg style="left:982.5px;top:366.5px" width="10" height="10" viewBox="0 0 10 10"><path d="M2.2 2.4A3.9 3.9 0 1 1 1.2 5.2" fill="none" stroke="#bdbdbd" stroke-width="1.1"/><path d="M1.3 0.8V3.2H3.7" fill="none" stroke="#bdbdbd" stroke-width="1.1"/></svg>
<div style="left:0;top:0;width:1280px;height:408px;overflow:hidden">
<svg style="left:878px;top:370px" width="120" height="120" viewBox="-60 -60 120 120"><path d="M35.76 -41.13A54.5 54.5 0 0 1 35.03 41.75" fill="none" stroke="url(#arcG)" stroke-width="4" stroke-linecap="round"/></svg>
<div class="wo" style="left:888.5px;top:380.5px"></div>
<div class="wr" style="left:890.5px;top:382.5px"></div>
<div class="wi" style="left:896.5px;top:388.5px"></div>
<svg style="left:897px;top:389px" width="82" height="82" viewBox="-41 -41 82 82"><path d="M0.00 -36.80L0.00 -39.20M4.80 -36.49L5.12 -38.86M9.52 -35.55L10.15 -37.86M14.08 -34.00L15.00 -36.22M18.40 -31.87L19.60 -33.95M22.40 -29.20L23.86 -31.10M26.02 -26.02L27.72 -27.72M29.20 -22.40L31.10 -23.86M31.87 -18.40L33.95 -19.60M34.00 -14.08L36.22 -15.00M35.55 -9.52L37.86 -10.15M36.49 -4.80L38.86 -5.12M36.80 -0.00L39.20 -0.00M36.49 4.80L38.86 5.12M35.55 9.52L37.86 10.15M34.00 14.08L36.22 15.00M31.87 18.40L33.95 19.60M29.20 22.40L31.10 23.86M26.02 26.02L27.72 27.72M22.40 29.20L23.86 31.10M18.40 31.87L19.60 33.95M14.08 34.00L15.00 36.22M9.52 35.55L10.15 37.86M4.80 36.49L5.12 38.86M0.00 36.80L0.00 39.20M-4.80 36.49L-5.12 38.86M-9.52 35.55L-10.15 37.86M-14.08 34.00L-15.00 36.22M-18.40 31.87L-19.60 33.95M-22.40 29.20L-23.86 31.10M-26.02 26.02L-27.72 27.72M-29.20 22.40L-31.10 23.86M-31.87 18.40L-33.95 19.60M-34.00 14.08L-36.22 15.00M-35.55 9.52L-37.86 10.15M-36.49 4.80L-38.86 5.12M-36.80 0.00L-39.20 0.00M-36.49 -4.80L-38.86 -5.12M-35.55 -9.52L-37.86 -10.15M-34.00 -14.08L-36.22 -15.00M-31.87 -18.40L-33.95 -19.60M-29.20 -22.40L-31.10 -23.86M-26.02 -26.02L-27.72 -27.72M-22.40 -29.20L-23.86 -31.10M-18.40 -31.87L-19.60 -33.95M-14.08 -34.00L-15.00 -36.22M-9.52 -35.55L-10.15 -37.86M-4.80 -36.49L-5.12 -38.86" stroke="rgba(255,255,255,0.11)" stroke-width="0.9"/></svg>
</div>
<div style="left:871px;top:407.7px;width:402.5px;height:31.1px;background:#2d2d2d;border-radius:0 0 8px 8px"></div>
<div style="left:1104px;top:415.2px;width:82.8px;height:16.8px;background:#1cbccb;border-radius:3px"></div>
<div class="t b" style="left:1109.6px;top:418.8px;font-size:10.3px;color:#fff">Save as preset</div>
<div style="left:1193px;top:415.2px;width:70.3px;height:16.8px;background:#3e3e3e;border-radius:3px"></div>
<div class="t b" style="left:1198px;top:418.5px;font-size:10.9px;color:#f0f0f0">Apply to all</div>

<!-- ============ TIMELINE CONTENT ============ -->
<svg style="left:15.5px;top:451.5px" width="11" height="13" viewBox="0 0 11 13"><path d="M0.8 0.8L10 6.2L6 7.2L8.2 11.8L6.6 12.4L4.4 7.8L0.8 10.5z" fill="none" stroke="#e0e0e0" stroke-width="1.45" stroke-linejoin="round"/></svg>
<svg style="left:36.3px;top:455.5px" width="7" height="4" viewBox="0 0 7 4"><path d="M0.6 0.6L3.5 3.2L6.4 0.6" fill="none" stroke="#e0e0e0" stroke-width="1.45"/></svg>
<div style="left:54px;top:450px;width:1px;height:15px;background:#383838"></div>
<svg style="left:66px;top:451.5px" width="12" height="12" viewBox="0 0 12 12"><path d="M3 1.2L0.8 3.4L3 5.6" fill="none" stroke="#e0e0e0" stroke-width="1.45"/><path d="M0.8 3.4H7.5A3.7 3.7 0 0 1 7.5 10.8H2.5" fill="none" stroke="#e0e0e0" stroke-width="1.45"/></svg>
<svg style="left:96px;top:451.5px" width="12" height="12" viewBox="0 0 12 12"><path d="M9 1.2L11.2 3.4L9 5.6" fill="none" stroke="#5a5a5a" stroke-width="1.45"/><path d="M11.2 3.4H4.5A3.7 3.7 0 0 0 4.5 10.8H9.5" fill="none" stroke="#5a5a5a" stroke-width="1.45"/></svg>
<svg style="left:127.5px;top:451px" width="10" height="13" viewBox="0 0 10 13"><path d="M0.5 0.8H3.4V12.2H0.5M9.5 0.8H6.6V12.2H9.5" fill="none" stroke="#e0e0e0" stroke-width="1.45"/></svg>
<svg style="left:157.5px;top:451px" width="10" height="13" viewBox="0 0 10 13"><path d="M0.5 0.8H3.4V12.2H0.5" fill="none" stroke="#e0e0e0" stroke-width="1.45" stroke-dasharray="1.5 1"/><path d="M9.5 0.8H6.6V12.2H9.5" fill="none" stroke="#e0e0e0" stroke-width="1.45"/></svg>
<svg style="left:187.5px;top:451px" width="10" height="13" viewBox="0 0 10 13"><path d="M0.5 0.8H3.4V12.2H0.5" fill="none" stroke="#e0e0e0" stroke-width="1.45"/><path d="M9.5 0.8H6.6V12.2H9.5" fill="none" stroke="#e0e0e0" stroke-width="1.45" stroke-dasharray="1.5 1"/></svg>
<svg style="left:216px;top:451px" width="12" height="13" viewBox="0 0 12 13"><path d="M0.5 1.6h11M2.5 1.6V12.2h7V1.6M4 0.6h4" fill="none" stroke="#e0e0e0" stroke-width="1.45"/></svg>
<svg style="left:247.5px;top:451.5px" width="10" height="12" viewBox="0 0 10 12"><path d="M0.8 0.8H9.2V7.5L5 11.2L0.8 7.5z" fill="none" stroke="#e0e0e0" stroke-width="1.45" stroke-linejoin="round"/></svg>
<svg style="left:275px;top:451px" width="15" height="13" viewBox="0 0 15 13"><path d="M0.6 1v11M14.4 1v11" stroke="#e0e0e0" stroke-width="1.45"/><rect x="3" y="0.8" width="9" height="11.4" rx="1" fill="none" stroke="#e0e0e0" stroke-width="1.45"/></svg>
<svg style="left:305.5px;top:451px" width="13" height="13" viewBox="0 0 13 13"><path d="M11.8 6.5A5.3 5.3 0 1 1 9 1.8" fill="none" stroke="#e0e0e0" stroke-width="1.45"/><path d="M5 3.8v5.4L9.2 6.5z" fill="none" stroke="#e0e0e0" stroke-width="1.45"/></svg>
<svg style="left:335.5px;top:451px" width="13" height="13" viewBox="0 0 13 13"><path d="M5.5 1L0.8 12H5.5z" fill="none" stroke="#e0e0e0" stroke-width="1.45"/><path d="M7.5 1L12.2 12H7.5z" fill="none" stroke="#e0e0e0" stroke-width="1.45"/></svg>
<svg style="left:365.5px;top:451px" width="13" height="13" viewBox="0 0 13 13"><path d="M3.2 2.4L7.6 0.9L11.9 5.6M9.8 10.6L5.4 12.1L1.1 7.4" fill="none" stroke="#e0e0e0" stroke-width="1.45" stroke-linejoin="round"/><path d="M1.1 7.4L2.6 3.6M11.9 5.6L10.4 9.4" fill="none" stroke="#e0e0e0" stroke-width="1.45"/></svg>
<svg style="left:395px;top:450.5px" width="14" height="14" viewBox="0 0 14 14"><path d="M3 0.5V11H13.5M0.5 3H11V13.5M3 11L11 3" fill="none" stroke="#e0e0e0" stroke-width="1.45"/></svg>
<svg style="left:424.5px;top:451.5px" width="15" height="13" viewBox="0 0 15 13"><path d="M10 1H0.8V10H7" fill="none" stroke="#e0e0e0" stroke-width="1.45"/><path d="M3 4h6M3 6.5h4M9.5 8.5l3.5 3.5M13 8.5L9.5 12" stroke="#e0e0e0" stroke-width="1.45"/></svg>
<svg style="left:455px;top:451.5px" width="15" height="13" viewBox="0 0 15 13"><path d="M5 1H0.8V11H5M7.5 0v10" fill="none" stroke="#e0e0e0" stroke-width="1.45"/><path d="M11.5 8l0.8 1.8 1.8 0.7-1.8 0.7-0.8 1.8-0.8-1.8-1.8-0.7 1.8-0.7z" fill="#d6d6d6"/></svg>
<div class="t" style="left:431.5px;top:444px;width:20px;height:9.5px;border-radius:3px;background:linear-gradient(90deg,#dcd0f5,#cfe8f7);color:#000;font-size:7.5px;font-weight:bold;line-height:9.5px;text-align:center;-webkit-text-stroke:0.2px #000">Free</div>
<div class="t" style="left:461.6px;top:444px;width:20px;height:9.5px;border-radius:3px;background:linear-gradient(90deg,#dcd0f5,#cfe8f7);color:#000;font-size:7.5px;font-weight:bold;line-height:9.5px;text-align:center;-webkit-text-stroke:0.2px #000">Free</div>
<div style="left:975.5px;top:447.3px;width:19.5px;height:19.3px;background:#1c1c1c;border-radius:3px"></div>
<svg style="left:977.5px;top:449px" width="16" height="16" viewBox="0 0 16 16"><rect x="1.5" y="5.5" width="13" height="5" rx="1" fill="#1cbccb"/><path d="M8 6v4" stroke="#1c1c1c" stroke-width="1"/><path d="M8 0.5v2.5M8 13v2.5M3 1.5l1.2 2M13 1.5l-1.2 2M3 14.5l1.2-2M13 14.5l-1.2-2" stroke="#1cbccb" stroke-width="1.1"/></svg>
<div style="left:1005px;top:447.3px;width:31.4px;height:19.3px;background:#1c1c1c;border-radius:3px"></div>
<div style="left:1025px;top:447.3px;width:1px;height:19.3px;background:#2a2a2a"></div>
<svg style="left:1008px;top:451px" width="14" height="12" viewBox="0 0 14 12"><rect x="0.5" y="3.5" width="13" height="5" rx="1" fill="#1cbccb"/><path d="M4 6h6" stroke="#1c1c1c" stroke-width="1.2"/></svg>
<svg style="left:1028px;top:455.5px" width="7" height="4" viewBox="0 0 7 4"><path d="M0.6 0.6L3.5 3.2L6.4 0.6" fill="none" stroke="#d6d6d6" stroke-width="1.3"/></svg>
<svg style="left:1049px;top:451px" width="17" height="14" viewBox="0 0 17 14"><path d="M7 1v12M7 3H1.5V9H7M7 4h6v4H7" fill="none" stroke="#e0e0e0" stroke-width="1.45"/><path d="M10 7l5 2.5-2 0.6 1.3 2.6-1 0.5-1.3-2.6-1.6 1.3z" fill="#d6d6d6"/></svg>
<svg style="left:1071px;top:455.5px" width="6" height="4" viewBox="0 0 6 4"><path d="M0.5 0.6L3 3.2L5.5 0.6" fill="none" stroke="#e0e0e0" stroke-width="1.45"/></svg>
<div style="left:1089px;top:449px;width:1px;height:15px;background:#383838"></div>
<svg style="left:1102px;top:451px" width="15" height="13" viewBox="0 0 15 13"><path d="M9 9H0.8V0.8H14.2V6" fill="none" stroke="#e0e0e0" stroke-width="1.45"/><path d="M3 2.5v2M5 2.5v1.5M7 2.5v2M9 2.5v1.5M11 2.5v2" stroke="#d6d6d6" stroke-width="0.8"/><circle cx="11" cy="9" r="2.4" fill="none" stroke="#e0e0e0" stroke-width="1.45"/><path d="M12.8 10.8l1.6 1.6" stroke="#e0e0e0" stroke-width="1.45"/></svg>
<svg style="left:1134px;top:451px" width="13" height="13" viewBox="0 0 13 13"><circle cx="6" cy="6" r="5.2" fill="none" stroke="#e0e0e0" stroke-width="1.45"/><path d="M3.5 6h5M9.8 9.8l2.5 2.5" stroke="#e0e0e0" stroke-width="1.45"/></svg>
<div style="left:1160.5px;top:456px;width:79px;height:2px;background:#0a0a0a"></div>
<div style="left:1160.5px;top:456px;width:14px;height:2px;background:#e8e8e8"></div>
<div style="left:1173px;top:451.5px;width:6.8px;height:10px;background:#f0f0f0;border-radius:2px"></div>
<svg style="left:1254px;top:451px" width="13" height="13" viewBox="0 0 13 13"><circle cx="6" cy="6" r="5.2" fill="none" stroke="#e0e0e0" stroke-width="1.45"/><path d="M3.5 6h5M6 3.5v5M9.8 9.8l2.5 2.5" stroke="#e0e0e0" stroke-width="1.45"/></svg>
<div style="left:8px;top:470.5px;width:1265px;height:1.2px;background:#1c1c1c"></div><div style="left:152px;top:471px;width:491px;height:1.2px;background:#3f3620"></div>
<div style="left:152.9px;top:473px;width:1px;height:10px;background:#555"></div>
<div class="t" style="left:155.9px;top:472.5px;font-size:9.6px;color:#6e6e6e">00:00</div>
<div style="left:356.3px;top:473px;width:1px;height:10px;background:#555"></div>
<div class="t" style="left:359.3px;top:472.5px;font-size:9.6px;color:#6e6e6e">00:03</div>
<div style="left:560.6px;top:473px;width:1px;height:10px;background:#555"></div>
<div class="t" style="left:563.6px;top:472.5px;font-size:9.6px;color:#6e6e6e">00:06</div>
<div style="left:764.8px;top:473px;width:1px;height:10px;background:#555"></div>
<div class="t" style="left:767.8px;top:472.5px;font-size:9.6px;color:#6e6e6e">00:09</div>
<div style="left:969px;top:473px;width:1px;height:10px;background:#555"></div>
<div class="t" style="left:972px;top:472.5px;font-size:9.6px;color:#6e6e6e">00:12</div>
<div style="left:1173px;top:473px;width:1px;height:10px;background:#555"></div>
<div class="t" style="left:1176px;top:472.5px;font-size:9.6px;color:#6e6e6e">00:15</div>
<div style="left:173.3px;top:475px;width:1px;height:4px;background:#4a4a4a"></div>
<div style="left:193.7px;top:475px;width:1px;height:4px;background:#4a4a4a"></div>
<div style="left:214.1px;top:475px;width:1px;height:4px;background:#4a4a4a"></div>
<div style="left:234.5px;top:475px;width:1px;height:4px;background:#4a4a4a"></div>
<div style="left:254.9px;top:475px;width:1px;height:4px;background:#4a4a4a"></div>
<div style="left:275.3px;top:475px;width:1px;height:4px;background:#4a4a4a"></div>
<div style="left:295.7px;top:475px;width:1px;height:4px;background:#4a4a4a"></div>
<div style="left:316.1px;top:475px;width:1px;height:4px;background:#4a4a4a"></div>
<div style="left:336.5px;top:475px;width:1px;height:4px;background:#4a4a4a"></div>
<div style="left:377.3px;top:475px;width:1px;height:4px;background:#4a4a4a"></div>
<div style="left:397.7px;top:475px;width:1px;height:4px;background:#4a4a4a"></div>
<div style="left:418.1px;top:475px;width:1px;height:4px;background:#4a4a4a"></div>
<div style="left:438.5px;top:475px;width:1px;height:4px;background:#4a4a4a"></div>
<div style="left:458.9px;top:475px;width:1px;height:4px;background:#4a4a4a"></div>
<div style="left:479.3px;top:475px;width:1px;height:4px;background:#4a4a4a"></div>
<div style="left:499.7px;top:475px;width:1px;height:4px;background:#4a4a4a"></div>
<div style="left:520.1px;top:475px;width:1px;height:4px;background:#4a4a4a"></div>
<div style="left:540.5px;top:475px;width:1px;height:4px;background:#4a4a4a"></div>
<div style="left:581.3px;top:475px;width:1px;height:4px;background:#4a4a4a"></div>
<div style="left:601.7px;top:475px;width:1px;height:4px;background:#4a4a4a"></div>
<div style="left:622.1px;top:475px;width:1px;height:4px;background:#4a4a4a"></div>
<div style="left:642.5px;top:475px;width:1px;height:4px;background:#4a4a4a"></div>
<div style="left:662.9px;top:475px;width:1px;height:4px;background:#4a4a4a"></div>
<div style="left:683.3px;top:475px;width:1px;height:4px;background:#4a4a4a"></div>
<div style="left:703.7px;top:475px;width:1px;height:4px;background:#4a4a4a"></div>
<div style="left:724.1px;top:475px;width:1px;height:4px;background:#4a4a4a"></div>
<div style="left:744.5px;top:475px;width:1px;height:4px;background:#4a4a4a"></div>
<div style="left:785.3px;top:475px;width:1px;height:4px;background:#4a4a4a"></div>
<div style="left:805.7px;top:475px;width:1px;height:4px;background:#4a4a4a"></div>
<div style="left:826.1px;top:475px;width:1px;height:4px;background:#4a4a4a"></div>
<div style="left:846.5px;top:475px;width:1px;height:4px;background:#4a4a4a"></div>
<div style="left:866.9px;top:475px;width:1px;height:4px;background:#4a4a4a"></div>
<div style="left:887.3px;top:475px;width:1px;height:4px;background:#4a4a4a"></div>
<div style="left:907.7px;top:475px;width:1px;height:4px;background:#4a4a4a"></div>
<div style="left:928.1px;top:475px;width:1px;height:4px;background:#4a4a4a"></div>
<div style="left:948.5px;top:475px;width:1px;height:4px;background:#4a4a4a"></div>
<div style="left:989.3px;top:475px;width:1px;height:4px;background:#4a4a4a"></div>
<div style="left:1009.7px;top:475px;width:1px;height:4px;background:#4a4a4a"></div>
<div style="left:1030.1px;top:475px;width:1px;height:4px;background:#4a4a4a"></div>
<div style="left:1050.5px;top:475px;width:1px;height:4px;background:#4a4a4a"></div>
<div style="left:1070.9px;top:475px;width:1px;height:4px;background:#4a4a4a"></div>
<div style="left:1091.3px;top:475px;width:1px;height:4px;background:#4a4a4a"></div>
<div style="left:1111.7px;top:475px;width:1px;height:4px;background:#4a4a4a"></div>
<div style="left:1132.1px;top:475px;width:1px;height:4px;background:#4a4a4a"></div>
<div style="left:1152.5px;top:475px;width:1px;height:4px;background:#4a4a4a"></div>
<div style="left:1193.3px;top:475px;width:1px;height:4px;background:#4a4a4a"></div>
<div style="left:1213.7px;top:475px;width:1px;height:4px;background:#4a4a4a"></div>
<div style="left:1234.1px;top:475px;width:1px;height:4px;background:#4a4a4a"></div>
<div style="left:1254.5px;top:475px;width:1px;height:4px;background:#4a4a4a"></div>
<div style="left:110px;top:494px;width:1px;height:179px;background:#1e1e1e"></div>
<div style="left:8px;top:547.5px;width:1260px;height:63.5px;background:#2c2c2c"></div>
<div style="left:110px;top:547.5px;width:1px;height:63.5px;background:#232323"></div>
<svg style="left:13.7px;top:574px" width="11" height="10" viewBox="0 0 11 10"><rect x="0.5" y="0.5" width="10" height="9" fill="none" stroke="#777" stroke-width="0.9"/><path d="M4.2 3v4L7.2 5z" fill="#999"/></svg>
<svg style="left:35.8px;top:574.5px" width="8" height="9" viewBox="0 0 8 9"><path d="M2.2 4V2.8A1.8 1.8 0 0 1 5.8 2.8V4" fill="none" stroke="#ddd" stroke-width="1.2"/><rect x="0.8" y="4" width="6.4" height="4.3" rx="1" fill="none" stroke="#ddd" stroke-width="1.3"/></svg>
<svg style="left:54.6px;top:575px" width="10" height="8" viewBox="0 0 10 8"><path d="M0.5 4Q5 -1.5 9.5 4Q5 9.5 0.5 4z" fill="none" stroke="#ccc" stroke-width="1.1"/><circle cx="5" cy="4" r="1.6" fill="#ccc"/></svg>
<svg style="left:74.7px;top:574px" width="10" height="10" viewBox="0 0 10 10"><path d="M0.6 3.3h1.8L5 1v8L2.4 6.7H0.6z" fill="none" stroke="#ccc" stroke-width="1"/><path d="M6.8 3.2Q7.8 5 6.8 6.8M8.3 2Q10 5 8.3 8" fill="none" stroke="#ccc" stroke-width="0.9"/></svg>
<svg style="left:95px;top:578px" width="9" height="2" viewBox="0 0 9 2"><circle cx="1" cy="1" r="0.9" fill="#ccc"/><circle cx="4.5" cy="1" r="0.9" fill="#ccc"/><circle cx="8" cy="1" r="0.9" fill="#ccc"/></svg>
<div style="left:114.2px;top:563.3px;width:31.7px;height:31.2px;background:#3a3a3a;border-radius:3px;border:1px dashed #4a4a4a"></div>
<svg style="left:125px;top:568.8px" width="10" height="10" viewBox="0 0 10 10"><path d="M1.8 7L2.1 5L6.3 0.9L8.4 3L4.2 7.1z" fill="none" stroke="#e0e0e0" stroke-width="1.2"/><path d="M1 9.2h8" stroke="#e0e0e0" stroke-width="1.3"/></svg>
<div class="t" style="left:130px;top:580.8px;font-size:10px;color:#dcdcdc;transform:translateX(-50%)">Cover</div>
<div style="left:150px;top:548.8px;width:494px;height:60px;background:#025357;border:1.6px solid #f0f0f0;border-left-width:2.6px;border-right-width:2.8px;border-radius:3px;overflow:hidden">
  <svg style="left:0;top:14.3px" width="492" height="30.9" viewBox="0 0 492 32" preserveAspectRatio="none"><defs><filter id="tb" x="0" y="0" width="100%" height="100%"><feGaussianBlur stdDeviation="0.8"/></filter><clipPath id="tcl"><rect width="492" height="32"/></clipPath></defs><g clip-path="url(#tcl)"><g filter="url(#tb)"><rect x="-5" y="-2" width="502" height="36" fill="#9a9590"/><g transform="translate(-39.15 0)"><rect x="0" y="0" width="41.25" height="32" fill="#9a9590"/>
<path d="M0 0H16L15 11L8 13L0 9z" fill="#3c2c24"/>
<rect x="15" y="0" width="6" height="7" fill="#c9a48e"/>
<path d="M21 0H30L29 9L22 10z" fill="#2a201c"/>
<rect x="29" y="0" width="5" height="7" fill="#b88a70"/>
<path d="M33 0H41.25V12L35 11z" fill="#4a2c20"/>
<path d="M0 8L10 11L12 24L0 26z" fill="#ececec"/>
<rect x="10" y="9" width="6" height="11" fill="#6e7a86"/>
<rect x="15" y="8" width="13" height="11" fill="#e6e6e6"/>
<path d="M27 10L41.25 8V24L30 22z" fill="#f2f2f2"/>
<rect x="12" y="5" width="6" height="3" fill="#a090d0"/>
<rect x="3" y="16" width="27" height="4.5" rx="2" fill="#c49480"/>
<rect x="24" y="18" width="9" height="4" fill="#d2a890"/>
<rect x="0" y="24" width="6" height="8" fill="#8a9878"/>
<rect x="6" y="22" width="12" height="10" fill="#1c1a1a"/>
<rect x="18" y="21.5" width="15" height="10.5" fill="#7488a4"/>
<rect x="22" y="25" width="7" height="5" fill="#9080c8"/>
<rect x="33" y="22" width="8.25" height="10" fill="#2e3436"/></g><g transform="translate(2.10 0)"><rect x="0" y="0" width="41.25" height="32" fill="#9a9590"/>
<path d="M0 0H16L15 11L8 13L0 9z" fill="#3c2c24"/>
<rect x="15" y="0" width="6" height="7" fill="#c9a48e"/>
<path d="M21 0H30L29 9L22 10z" fill="#2a201c"/>
<rect x="29" y="0" width="5" height="7" fill="#b88a70"/>
<path d="M33 0H41.25V12L35 11z" fill="#4a2c20"/>
<path d="M0 8L10 11L12 24L0 26z" fill="#ececec"/>
<rect x="10" y="9" width="6" height="11" fill="#6e7a86"/>
<rect x="15" y="8" width="13" height="11" fill="#e6e6e6"/>
<path d="M27 10L41.25 8V24L30 22z" fill="#f2f2f2"/>
<rect x="12" y="5" width="6" height="3" fill="#a090d0"/>
<rect x="3" y="16" width="27" height="4.5" rx="2" fill="#c49480"/>
<rect x="24" y="18" width="9" height="4" fill="#d2a890"/>
<rect x="0" y="24" width="6" height="8" fill="#8a9878"/>
<rect x="6" y="22" width="12" height="10" fill="#1c1a1a"/>
<rect x="18" y="21.5" width="15" height="10.5" fill="#7488a4"/>
<rect x="22" y="25" width="7" height="5" fill="#9080c8"/>
<rect x="33" y="22" width="8.25" height="10" fill="#2e3436"/></g><g transform="translate(43.35 0)"><rect x="0" y="0" width="41.25" height="32" fill="#9a9590"/>
<path d="M0 0H16L15 11L8 13L0 9z" fill="#3c2c24"/>
<rect x="15" y="0" width="6" height="7" fill="#c9a48e"/>
<path d="M21 0H30L29 9L22 10z" fill="#2a201c"/>
<rect x="29" y="0" width="5" height="7" fill="#b88a70"/>
<path d="M33 0H41.25V12L35 11z" fill="#4a2c20"/>
<path d="M0 8L10 11L12 24L0 26z" fill="#ececec"/>
<rect x="10" y="9" width="6" height="11" fill="#6e7a86"/>
<rect x="15" y="8" width="13" height="11" fill="#e6e6e6"/>
<path d="M27 10L41.25 8V24L30 22z" fill="#f2f2f2"/>
<rect x="12" y="5" width="6" height="3" fill="#a090d0"/>
<rect x="3" y="16" width="27" height="4.5" rx="2" fill="#c49480"/>
<rect x="24" y="18" width="9" height="4" fill="#d2a890"/>
<rect x="0" y="24" width="6" height="8" fill="#8a9878"/>
<rect x="6" y="22" width="12" height="10" fill="#1c1a1a"/>
<rect x="18" y="21.5" width="15" height="10.5" fill="#7488a4"/>
<rect x="22" y="25" width="7" height="5" fill="#9080c8"/>
<rect x="33" y="22" width="8.25" height="10" fill="#2e3436"/></g><g transform="translate(84.60 0)"><rect x="0" y="0" width="41.25" height="32" fill="#9a9590"/>
<path d="M0 0H16L15 11L8 13L0 9z" fill="#3c2c24"/>
<rect x="15" y="0" width="6" height="7" fill="#c9a48e"/>
<path d="M21 0H30L29 9L22 10z" fill="#2a201c"/>
<rect x="29" y="0" width="5" height="7" fill="#b88a70"/>
<path d="M33 0H41.25V12L35 11z" fill="#4a2c20"/>
<path d="M0 8L10 11L12 24L0 26z" fill="#ececec"/>
<rect x="10" y="9" width="6" height="11" fill="#6e7a86"/>
<rect x="15" y="8" width="13" height="11" fill="#e6e6e6"/>
<path d="M27 10L41.25 8V24L30 22z" fill="#f2f2f2"/>
<rect x="12" y="5" width="6" height="3" fill="#a090d0"/>
<rect x="3" y="16" width="27" height="4.5" rx="2" fill="#c49480"/>
<rect x="24" y="18" width="9" height="4" fill="#d2a890"/>
<rect x="0" y="24" width="6" height="8" fill="#8a9878"/>
<rect x="6" y="22" width="12" height="10" fill="#1c1a1a"/>
<rect x="18" y="21.5" width="15" height="10.5" fill="#7488a4"/>
<rect x="22" y="25" width="7" height="5" fill="#9080c8"/>
<rect x="33" y="22" width="8.25" height="10" fill="#2e3436"/></g><g transform="translate(125.85 0)"><rect x="0" y="0" width="41.25" height="32" fill="#9a9590"/>
<path d="M0 0H16L15 11L8 13L0 9z" fill="#3c2c24"/>
<rect x="15" y="0" width="6" height="7" fill="#c9a48e"/>
<path d="M21 0H30L29 9L22 10z" fill="#2a201c"/>
<rect x="29" y="0" width="5" height="7" fill="#b88a70"/>
<path d="M33 0H41.25V12L35 11z" fill="#4a2c20"/>
<path d="M0 8L10 11L12 24L0 26z" fill="#ececec"/>
<rect x="10" y="9" width="6" height="11" fill="#6e7a86"/>
<rect x="15" y="8" width="13" height="11" fill="#e6e6e6"/>
<path d="M27 10L41.25 8V24L30 22z" fill="#f2f2f2"/>
<rect x="12" y="5" width="6" height="3" fill="#a090d0"/>
<rect x="3" y="16" width="27" height="4.5" rx="2" fill="#c49480"/>
<rect x="24" y="18" width="9" height="4" fill="#d2a890"/>
<rect x="0" y="24" width="6" height="8" fill="#8a9878"/>
<rect x="6" y="22" width="12" height="10" fill="#1c1a1a"/>
<rect x="18" y="21.5" width="15" height="10.5" fill="#7488a4"/>
<rect x="22" y="25" width="7" height="5" fill="#9080c8"/>
<rect x="33" y="22" width="8.25" height="10" fill="#2e3436"/></g><g transform="translate(167.10 0)"><rect x="0" y="0" width="41.25" height="32" fill="#9a9590"/>
<path d="M0 0H16L15 11L8 13L0 9z" fill="#3c2c24"/>
<rect x="15" y="0" width="6" height="7" fill="#c9a48e"/>
<path d="M21 0H30L29 9L22 10z" fill="#2a201c"/>
<rect x="29" y="0" width="5" height="7" fill="#b88a70"/>
<path d="M33 0H41.25V12L35 11z" fill="#4a2c20"/>
<path d="M0 8L10 11L12 24L0 26z" fill="#ececec"/>
<rect x="10" y="9" width="6" height="11" fill="#6e7a86"/>
<rect x="15" y="8" width="13" height="11" fill="#e6e6e6"/>
<path d="M27 10L41.25 8V24L30 22z" fill="#f2f2f2"/>
<rect x="12" y="5" width="6" height="3" fill="#a090d0"/>
<rect x="3" y="16" width="27" height="4.5" rx="2" fill="#c49480"/>
<rect x="24" y="18" width="9" height="4" fill="#d2a890"/>
<rect x="0" y="24" width="6" height="8" fill="#8a9878"/>
<rect x="6" y="22" width="12" height="10" fill="#1c1a1a"/>
<rect x="18" y="21.5" width="15" height="10.5" fill="#7488a4"/>
<rect x="22" y="25" width="7" height="5" fill="#9080c8"/>
<rect x="33" y="22" width="8.25" height="10" fill="#2e3436"/></g><g transform="translate(208.35 0)"><rect x="0" y="0" width="41.25" height="32" fill="#9a9590"/>
<path d="M0 0H16L15 11L8 13L0 9z" fill="#3c2c24"/>
<rect x="15" y="0" width="6" height="7" fill="#c9a48e"/>
<path d="M21 0H30L29 9L22 10z" fill="#2a201c"/>
<rect x="29" y="0" width="5" height="7" fill="#b88a70"/>
<path d="M33 0H41.25V12L35 11z" fill="#4a2c20"/>
<path d="M0 8L10 11L12 24L0 26z" fill="#ececec"/>
<rect x="10" y="9" width="6" height="11" fill="#6e7a86"/>
<rect x="15" y="8" width="13" height="11" fill="#e6e6e6"/>
<path d="M27 10L41.25 8V24L30 22z" fill="#f2f2f2"/>
<rect x="12" y="5" width="6" height="3" fill="#a090d0"/>
<rect x="3" y="16" width="27" height="4.5" rx="2" fill="#c49480"/>
<rect x="24" y="18" width="9" height="4" fill="#d2a890"/>
<rect x="0" y="24" width="6" height="8" fill="#8a9878"/>
<rect x="6" y="22" width="12" height="10" fill="#1c1a1a"/>
<rect x="18" y="21.5" width="15" height="10.5" fill="#7488a4"/>
<rect x="22" y="25" width="7" height="5" fill="#9080c8"/>
<rect x="33" y="22" width="8.25" height="10" fill="#2e3436"/></g><g transform="translate(249.60 0)"><rect x="0" y="0" width="41.25" height="32" fill="#9a9590"/>
<path d="M0 0H16L15 11L8 13L0 9z" fill="#3c2c24"/>
<rect x="15" y="0" width="6" height="7" fill="#c9a48e"/>
<path d="M21 0H30L29 9L22 10z" fill="#2a201c"/>
<rect x="29" y="0" width="5" height="7" fill="#b88a70"/>
<path d="M33 0H41.25V12L35 11z" fill="#4a2c20"/>
<path d="M0 8L10 11L12 24L0 26z" fill="#ececec"/>
<rect x="10" y="9" width="6" height="11" fill="#6e7a86"/>
<rect x="15" y="8" width="13" height="11" fill="#e6e6e6"/>
<path d="M27 10L41.25 8V24L30 22z" fill="#f2f2f2"/>
<rect x="12" y="5" width="6" height="3" fill="#a090d0"/>
<rect x="3" y="16" width="27" height="4.5" rx="2" fill="#c49480"/>
<rect x="24" y="18" width="9" height="4" fill="#d2a890"/>
<rect x="0" y="24" width="6" height="8" fill="#8a9878"/>
<rect x="6" y="22" width="12" height="10" fill="#1c1a1a"/>
<rect x="18" y="21.5" width="15" height="10.5" fill="#7488a4"/>
<rect x="22" y="25" width="7" height="5" fill="#9080c8"/>
<rect x="33" y="22" width="8.25" height="10" fill="#2e3436"/></g><g transform="translate(290.85 0)"><rect x="0" y="0" width="41.25" height="32" fill="#9a9590"/>
<path d="M0 0H16L15 11L8 13L0 9z" fill="#3c2c24"/>
<rect x="15" y="0" width="6" height="7" fill="#c9a48e"/>
<path d="M21 0H30L29 9L22 10z" fill="#2a201c"/>
<rect x="29" y="0" width="5" height="7" fill="#b88a70"/>
<path d="M33 0H41.25V12L35 11z" fill="#4a2c20"/>
<path d="M0 8L10 11L12 24L0 26z" fill="#ececec"/>
<rect x="10" y="9" width="6" height="11" fill="#6e7a86"/>
<rect x="15" y="8" width="13" height="11" fill="#e6e6e6"/>
<path d="M27 10L41.25 8V24L30 22z" fill="#f2f2f2"/>
<rect x="12" y="5" width="6" height="3" fill="#a090d0"/>
<rect x="3" y="16" width="27" height="4.5" rx="2" fill="#c49480"/>
<rect x="24" y="18" width="9" height="4" fill="#d2a890"/>
<rect x="0" y="24" width="6" height="8" fill="#8a9878"/>
<rect x="6" y="22" width="12" height="10" fill="#1c1a1a"/>
<rect x="18" y="21.5" width="15" height="10.5" fill="#7488a4"/>
<rect x="22" y="25" width="7" height="5" fill="#9080c8"/>
<rect x="33" y="22" width="8.25" height="10" fill="#2e3436"/></g><g transform="translate(332.10 0)"><rect x="0" y="0" width="41.25" height="32" fill="#9a9590"/>
<path d="M0 0H16L15 11L8 13L0 9z" fill="#3c2c24"/>
<rect x="15" y="0" width="6" height="7" fill="#c9a48e"/>
<path d="M21 0H30L29 9L22 10z" fill="#2a201c"/>
<rect x="29" y="0" width="5" height="7" fill="#b88a70"/>
<path d="M33 0H41.25V12L35 11z" fill="#4a2c20"/>
<path d="M0 8L10 11L12 24L0 26z" fill="#ececec"/>
<rect x="10" y="9" width="6" height="11" fill="#6e7a86"/>
<rect x="15" y="8" width="13" height="11" fill="#e6e6e6"/>
<path d="M27 10L41.25 8V24L30 22z" fill="#f2f2f2"/>
<rect x="12" y="5" width="6" height="3" fill="#a090d0"/>
<rect x="3" y="16" width="27" height="4.5" rx="2" fill="#c49480"/>
<rect x="24" y="18" width="9" height="4" fill="#d2a890"/>
<rect x="0" y="24" width="6" height="8" fill="#8a9878"/>
<rect x="6" y="22" width="12" height="10" fill="#1c1a1a"/>
<rect x="18" y="21.5" width="15" height="10.5" fill="#7488a4"/>
<rect x="22" y="25" width="7" height="5" fill="#9080c8"/>
<rect x="33" y="22" width="8.25" height="10" fill="#2e3436"/></g><g transform="translate(373.35 0)"><rect x="0" y="0" width="41.25" height="32" fill="#9a9590"/>
<path d="M0 0H16L15 11L8 13L0 9z" fill="#3c2c24"/>
<rect x="15" y="0" width="6" height="7" fill="#c9a48e"/>
<path d="M21 0H30L29 9L22 10z" fill="#2a201c"/>
<rect x="29" y="0" width="5" height="7" fill="#b88a70"/>
<path d="M33 0H41.25V12L35 11z" fill="#4a2c20"/>
<path d="M0 8L10 11L12 24L0 26z" fill="#ececec"/>
<rect x="10" y="9" width="6" height="11" fill="#6e7a86"/>
<rect x="15" y="8" width="13" height="11" fill="#e6e6e6"/>
<path d="M27 10L41.25 8V24L30 22z" fill="#f2f2f2"/>
<rect x="12" y="5" width="6" height="3" fill="#a090d0"/>
<rect x="3" y="16" width="27" height="4.5" rx="2" fill="#c49480"/>
<rect x="24" y="18" width="9" height="4" fill="#d2a890"/>
<rect x="0" y="24" width="6" height="8" fill="#8a9878"/>
<rect x="6" y="22" width="12" height="10" fill="#1c1a1a"/>
<rect x="18" y="21.5" width="15" height="10.5" fill="#7488a4"/>
<rect x="22" y="25" width="7" height="5" fill="#9080c8"/>
<rect x="33" y="22" width="8.25" height="10" fill="#2e3436"/></g><g transform="translate(414.60 0)"><rect x="0" y="0" width="41.25" height="32" fill="#9a9590"/>
<path d="M0 0H16L15 11L8 13L0 9z" fill="#3c2c24"/>
<rect x="15" y="0" width="6" height="7" fill="#c9a48e"/>
<path d="M21 0H30L29 9L22 10z" fill="#2a201c"/>
<rect x="29" y="0" width="5" height="7" fill="#b88a70"/>
<path d="M33 0H41.25V12L35 11z" fill="#4a2c20"/>
<path d="M0 8L10 11L12 24L0 26z" fill="#ececec"/>
<rect x="10" y="9" width="6" height="11" fill="#6e7a86"/>
<rect x="15" y="8" width="13" height="11" fill="#e6e6e6"/>
<path d="M27 10L41.25 8V24L30 22z" fill="#f2f2f2"/>
<rect x="12" y="5" width="6" height="3" fill="#a090d0"/>
<rect x="3" y="16" width="27" height="4.5" rx="2" fill="#c49480"/>
<rect x="24" y="18" width="9" height="4" fill="#d2a890"/>
<rect x="0" y="24" width="6" height="8" fill="#8a9878"/>
<rect x="6" y="22" width="12" height="10" fill="#1c1a1a"/>
<rect x="18" y="21.5" width="15" height="10.5" fill="#7488a4"/>
<rect x="22" y="25" width="7" height="5" fill="#9080c8"/>
<rect x="33" y="22" width="8.25" height="10" fill="#2e3436"/></g><g transform="translate(455.85 0)"><rect x="0" y="0" width="41.25" height="32" fill="#9a9590"/>
<path d="M0 0H16L15 11L8 13L0 9z" fill="#3c2c24"/>
<rect x="15" y="0" width="6" height="7" fill="#c9a48e"/>
<path d="M21 0H30L29 9L22 10z" fill="#2a201c"/>
<rect x="29" y="0" width="5" height="7" fill="#b88a70"/>
<path d="M33 0H41.25V12L35 11z" fill="#4a2c20"/>
<path d="M0 8L10 11L12 24L0 26z" fill="#ececec"/>
<rect x="10" y="9" width="6" height="11" fill="#6e7a86"/>
<rect x="15" y="8" width="13" height="11" fill="#e6e6e6"/>
<path d="M27 10L41.25 8V24L30 22z" fill="#f2f2f2"/>
<rect x="12" y="5" width="6" height="3" fill="#a090d0"/>
<rect x="3" y="16" width="27" height="4.5" rx="2" fill="#c49480"/>
<rect x="24" y="18" width="9" height="4" fill="#d2a890"/>
<rect x="0" y="24" width="6" height="8" fill="#8a9878"/>
<rect x="6" y="22" width="12" height="10" fill="#1c1a1a"/>
<rect x="18" y="21.5" width="15" height="10.5" fill="#7488a4"/>
<rect x="22" y="25" width="7" height="5" fill="#9080c8"/>
<rect x="33" y="22" width="8.25" height="10" fill="#2e3436"/></g></g></g></svg>
  <div style="left:0;top:52.5px;width:492px;height:1px;background:#2a7a80"></div>
  <div style="left:4px;top:1.5px;width:101px;height:12px;background:#08454a"></div>
  <div style="left:111px;top:1.5px;width:50px;height:12px;background:#08454a"></div>
  <div class="t" style="left:6px;top:3px;font-size:10px;color:#dceeee;letter-spacing:-0.2px">production ID_4723082</div>
  <div class="t" style="left:113px;top:3px;font-size:10px;color:#dceeee;letter-spacing:-0.2px">00:00:07:06</div>
</div>
<div style="left:113.5px;top:666.2px;width:1152.5px;height:4.8px;background:#444;border-radius:3px"></div>
<div style="left:195px;top:478px;width:1.2px;height:182px;background:#d8d8d8"></div>
<svg style="left:191.5px;top:471.5px" width="9" height="11" viewBox="0 0 9 11"><path d="M1.2 0.8H7.8V7L4.5 10.2L1.2 7z" fill="#262626" stroke="#eee" stroke-width="1.4" stroke-linejoin="round"/></svg>
<div style="left:822.5px;top:415.3px;width:149.5px;height:265px;background:#2b2b2b;border:1px solid #383838;border-radius:7px;box-shadow:0 2px 8px rgba(0,0,0,0.45)"></div>
<div class="t" style="left:850.6px;top:426.1px;font-size:10px;color:#dcdcdc">Original</div>
<div class="t" style="left:850.6px;top:449.4px;font-size:10px;color:#dcdcdc">Custom</div>
<div style="left:827px;top:465.6px;width:140px;height:1px;background:#3c3c3c"></div>
<div class="t" style="left:850.6px;top:473.1px;font-size:10px;color:#dcdcdc">16:9</div>
<div style="left:943.6px;top:473.2px;width:13.8px;height:7.8px;border:1.2px solid #d0d0d0;border-radius:1.5px;background:#444"></div>
<div class="t" style="left:850.6px;top:496.8px;font-size:10px;color:#dcdcdc">4:3</div>
<div style="left:943.6px;top:495.9px;width:13.8px;height:10.3px;border:1.2px solid #d0d0d0;border-radius:1.5px;background:#444"></div>
<div class="t" style="left:850.6px;top:519.9px;font-size:10px;color:#dcdcdc">2.35:1</div>
<div style="left:943.6px;top:521px;width:13.8px;height:6.2px;border:1.2px solid #d0d0d0;border-radius:1.5px;background:#444"></div>
<div class="t" style="left:850.6px;top:543.3px;font-size:10px;color:#dcdcdc">2:1</div>
<div style="left:943.6px;top:544.3px;width:13.8px;height:7.2px;border:1.2px solid #d0d0d0;border-radius:1.5px;background:#444"></div>
<div class="t" style="left:850.6px;top:566.8px;font-size:10px;color:#dcdcdc">1.85:1</div>
<div style="left:943.6px;top:567.3px;width:13.8px;height:7.9px;border:1.2px solid #d0d0d0;border-radius:1.5px;background:#444"></div>
<div style="left:827px;top:584px;width:140px;height:1px;background:#3c3c3c"></div>
<div class="t" style="left:850.6px;top:591.3px;font-size:10px;color:#dcdcdc">9:16</div>
<div style="left:946px;top:588.4px;width:8.8px;height:13.2px;border:1.2px solid #d0d0d0;border-radius:1.5px;background:#444"></div>
<div class="t" style="left:850.6px;top:614.3px;font-size:10px;color:#dcdcdc">3:4</div>
<div style="left:944.7px;top:612px;width:11.1px;height:13.3px;border:1.2px solid #d0d0d0;border-radius:1.5px;background:#444"></div>
<div class="t" style="left:850.6px;top:637.8px;font-size:10px;color:#dcdcdc">5.8-inch</div>
<div style="left:947.4px;top:635px;width:6.6px;height:14px;border:1.2px solid #d0d0d0;border-radius:1.5px;background:#444"></div>
<div class="t" style="left:850.6px;top:661.5px;font-size:10px;color:#dcdcdc">1:1</div>
<div style="left:944px;top:658.3px;width:14px;height:13.7px;border:1.2px solid #d0d0d0;border-radius:1.5px;background:#444"></div>
<svg style="left:834px;top:591.5px" width="7" height="6" viewBox="0 0 7 6"><path d="M0.6 3L2.6 5L6.4 0.8" fill="none" stroke="#1cbccb" stroke-width="1.3"/></svg>
</body></html>
